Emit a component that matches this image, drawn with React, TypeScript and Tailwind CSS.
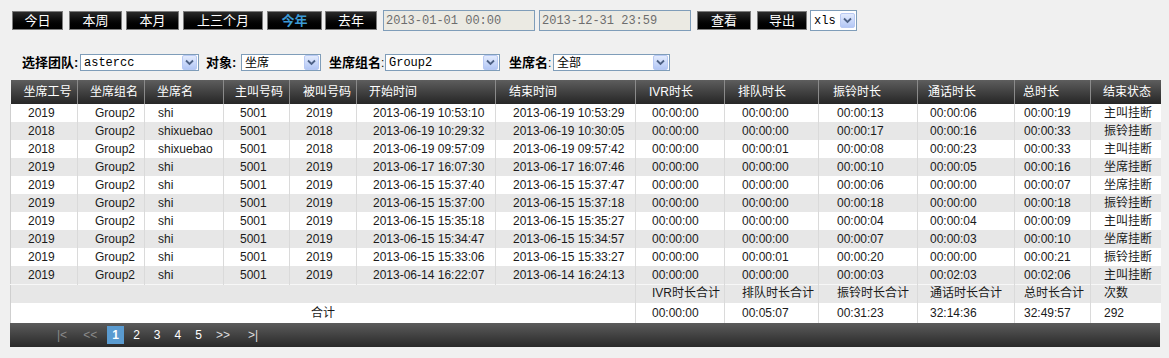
const cjk = "font-['Liberation_Sans','Noto_Sans_CJK_SC',sans-serif]";
const mono = "font-['Liberation_Mono','Noto_Sans_CJK_SC',monospace]";

const widths = [67, 67, 79, 66, 67, 139, 140, 89, 94, 99, 97, 76, 70];
const headPad = [13, 12, 12, 11, 13, 12, 13, 13, 13, 14, 10, 8, 12];
const cellPad = [17, 17, 13, 16, 16, 16, 17, 16, 17, 18, 12, 9, 13];

const headers = ["坐席工号", "坐席组名", "坐席名", "主叫号码", "被叫号码", "开始时间", "结束时间", "IVR时长", "排队时长", "振铃时长", "通话时长", "总时长", "结束状态"];

const rows = [
  ["2019", "Group2", "shi", "5001", "2019", "2013-06-19 10:53:10", "2013-06-19 10:53:29", "00:00:00", "00:00:00", "00:00:13", "00:00:06", "00:00:19", "主叫挂断"],
  ["2018", "Group2", "shixuebao", "5001", "2018", "2013-06-19 10:29:32", "2013-06-19 10:30:05", "00:00:00", "00:00:00", "00:00:17", "00:00:16", "00:00:33", "振铃挂断"],
  ["2018", "Group2", "shixuebao", "5001", "2018", "2013-06-19 09:57:09", "2013-06-19 09:57:42", "00:00:00", "00:00:01", "00:00:08", "00:00:23", "00:00:33", "主叫挂断"],
  ["2019", "Group2", "shi", "5001", "2019", "2013-06-17 16:07:30", "2013-06-17 16:07:46", "00:00:00", "00:00:00", "00:00:10", "00:00:05", "00:00:16", "坐席挂断"],
  ["2019", "Group2", "shi", "5001", "2019", "2013-06-15 15:37:40", "2013-06-15 15:37:47", "00:00:00", "00:00:00", "00:00:06", "00:00:00", "00:00:07", "坐席挂断"],
  ["2019", "Group2", "shi", "5001", "2019", "2013-06-15 15:37:00", "2013-06-15 15:37:18", "00:00:00", "00:00:00", "00:00:18", "00:00:00", "00:00:18", "振铃挂断"],
  ["2019", "Group2", "shi", "5001", "2019", "2013-06-15 15:35:18", "2013-06-15 15:35:27", "00:00:00", "00:00:00", "00:00:04", "00:00:04", "00:00:09", "主叫挂断"],
  ["2019", "Group2", "shi", "5001", "2019", "2013-06-15 15:34:47", "2013-06-15 15:34:57", "00:00:00", "00:00:00", "00:00:07", "00:00:03", "00:00:10", "坐席挂断"],
  ["2019", "Group2", "shi", "5001", "2019", "2013-06-15 15:33:06", "2013-06-15 15:33:27", "00:00:00", "00:00:01", "00:00:20", "00:00:00", "00:00:21", "振铃挂断"],
  ["2019", "Group2", "shi", "5001", "2019", "2013-06-14 16:22:07", "2013-06-14 16:24:13", "00:00:00", "00:00:00", "00:00:03", "00:02:03", "00:02:06", "主叫挂断"],
];

const sumLabels = ["IVR时长合计", "排队时长合计", "振铃时长合计", "通话时长合计", "总时长合计", "次数"];
const sumValues = ["00:00:00", "00:05:07", "00:31:23", "32:14:36", "32:49:57", "292"];

function TopButton({ label, active, ml, w }: { label: string; active?: boolean; ml: number; w: number }) {
  return (
    <div
      style={{ marginLeft: ml, width: w }}
      className={`h-[19px] flex items-center justify-center border border-[#7c7c7c] bg-gradient-to-b from-[#2a2a2a] to-black text-[13px] ${cjk} ${active ? "text-[#3b9ad6] font-bold" : "text-white"}`}
    >
      {label}
    </div>
  );
}

function Arrow() {
  return (
    <div className="w-[15px] h-[15px] mr-px border border-[#b8c9f3] rounded-[2px] bg-gradient-to-b from-[#e3ebfd] to-[#b3c7f5] flex items-center justify-center">
      <svg width="9" height="7" viewBox="0 0 9 7">
        <path d="M1 1.5 L4.5 5 L8 1.5" fill="none" stroke="#4d6185" strokeWidth="1.8" />
      </svg>
    </div>
  );
}

function XpSelect({ value, w, h = 17, font, ml = 0 }: { value: string; w: number; h?: number; font: string; ml?: number }) {
  return (
    <div
      style={{ width: w, height: h, marginLeft: ml }}
      className="flex items-center justify-between border border-[#7f9db9] bg-white shrink-0"
    >
      <span className={`pl-[3px] text-[12px] text-black ${font}`}>{value}</span>
      <Arrow />
    </div>
  );
}

function Label({ text, ml, w, colon }: { text: string; ml: number; w: number; colon?: boolean }) {
  return (
    <span style={{ marginLeft: ml, width: w }} className={`shrink-0 whitespace-nowrap text-[13px] text-black ${cjk}`}>
      <span className="font-bold">{text}</span>
      {colon && <span className="text-[12px]">:</span>}
    </span>
  );
}

export default function App() {
  return (
    <div className="w-[1169px] h-[358px] bg-[#f0f0f0] overflow-hidden">
      {/* toolbar */}
      <div className="flex items-center pt-[10px] h-[31px]">
        <TopButton label="今日" ml={12} w={51} />
        <TopButton label="本周" ml={6} w={53} />
        <TopButton label="本月" ml={4} w={53} />
        <TopButton label="上三个月" ml={4} w={80} />
        <TopButton label="今年" ml={4} w={55} active />
        <TopButton label="去年" ml={3} w={52} />
        <div className={`ml-[6px] w-[152px] h-[21px] border border-[#7f9db9] bg-[#ebeae3] text-[#6d6d6d] text-[12px] pl-[2px] flex items-center ${mono}`}>
          2013-01-01 00:00
        </div>
        <div className={`ml-[4px] w-[152px] h-[21px] border border-[#7f9db9] bg-[#ebeae3] text-[#6d6d6d] text-[12px] pl-[2px] flex items-center ${mono}`}>
          2013-12-31 23:59
        </div>
        <TopButton label="查看" ml={6} w={54} />
        <TopButton label="导出" ml={6} w={50} />
        <XpSelect value="xls" w={47} h={21} font={mono} ml={3} />
      </div>

      {/* filters */}
      <div className="flex items-center mt-[23px] h-[17px]">
        <Label text="选择团队:" ml={22} w={55} />
        <XpSelect value="astercc" w={119} font={mono} ml={3} />
        <Label text="对象:" ml={7} w={32} />
        <XpSelect value="坐席" w={80} font={cjk} ml={3} />
        <Label text="坐席组名" ml={8} w={56} colon />
        <XpSelect value="Group2" w={115} font={mono} />
        <Label text="坐席名" ml={9} w={44} colon />
        <XpSelect value="全部" w={117} font={cjk} />
      </div>

      {/* table */}
      <div className="ml-[10px] mt-[9px] w-[1150px]">
        <table className={`table-fixed border-collapse w-[1150px] text-[12px] ${cjk}`}>
          <colgroup>
            {widths.map((w, i) => (
              <col key={i} style={{ width: w }} />
            ))}
          </colgroup>
          <thead>
            <tr className="h-[24px] bg-gradient-to-b from-[#5e5e5e] to-[#262626]">
              {headers.map((h, i) => (
                <th
                  key={h}
                  style={{ paddingLeft: headPad[i] }}
                  className="text-left font-normal text-white text-[12px] border-r border-[#8a8a8a] last:border-r-0 whitespace-nowrap"
                >
                  {h}
                </th>
              ))}
            </tr>
          </thead>
          <tbody className="border-l border-[#cfcfcf]">
            {rows.map((r, ri) => (
              <tr key={ri} className={`h-[18px] ${ri % 2 === 1 ? "bg-[#e7e7e7]" : "bg-white"}`}>
                {r.map((c, ci) => (
                  <td
                    key={ci}
                    style={{ paddingLeft: cellPad[ci] }}
                    className="text-left text-[#1a1a1a] border-r border-[#dadada] last:border-r-0 whitespace-nowrap leading-[18px] py-0"
                  >
                    {c}
                  </td>
                ))}
              </tr>
            ))}
            <tr className="h-[18px] bg-[#e7e7e7] border-t border-[#f7f7f7]">
              <td colSpan={7} className="border-r border-[#dadada]" />
              {sumLabels.map((s, i) => (
                <td
                  key={s}
                  style={{ paddingLeft: cellPad[i + 7] }}
                  className="text-left text-[#1a1a1a] border-r border-[#dadada] last:border-r-0 whitespace-nowrap leading-[17px]"
                >
                  {s}
                </td>
              ))}
            </tr>
            <tr className="h-[20px] bg-white">
              <td colSpan={7} className="text-center text-[#1a1a1a] border-r border-[#dadada] leading-[20px]">
                合计
              </td>
              {sumValues.map((s, i) => (
                <td
                  key={i}
                  style={{ paddingLeft: cellPad[i + 7] }}
                  className="text-left text-[#1a1a1a] border-r border-[#dadada] last:border-r-0 whitespace-nowrap leading-[20px]"
                >
                  {s}
                </td>
              ))}
            </tr>
          </tbody>
        </table>

        {/* pager */}
        <div className="h-[24px] bg-gradient-to-b from-[#5c5c5c] to-[#2a2a2a] flex items-center text-[12px] font-['Liberation_Sans',sans-serif]">
          <span className="ml-[47px] text-[#8a8a8a]">|&lt;</span>
          <span className="ml-[16px] text-[#8a8a8a]">&lt;&lt;</span>
          <span className="ml-[10px] w-[17px] h-[18px] bg-[#5a9bd0] text-white font-bold flex items-center justify-center">1</span>
          <span className="ml-[9px] text-white">2</span>
          <span className="ml-[14px] text-white">3</span>
          <span className="ml-[14px] text-white">4</span>
          <span className="ml-[14px] text-white">5</span>
          <span className="ml-[14px] text-[#dddddd]">&gt;&gt;</span>
          <span className="ml-[18px] text-[#dddddd]">&gt;|</span>
        </div>
      </div>
    </div>
  );
}
